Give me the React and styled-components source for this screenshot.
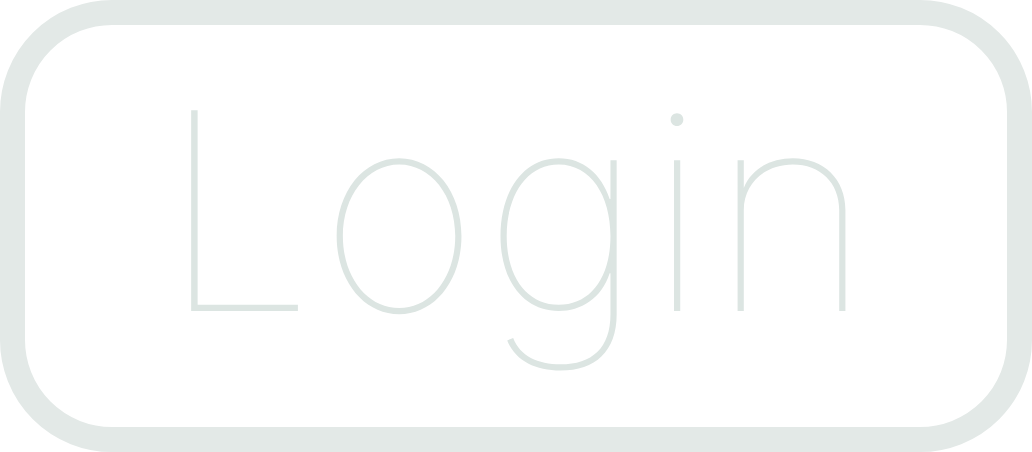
import React from 'react';
import styled, { createGlobalStyle } from 'styled-components';

const GlobalStyle = createGlobalStyle`
  html, body {
    margin: 0;
    padding: 0;
    background: #ffffff;
  }
`;

const Page = styled.div`
  width: 1032px;
  height: 452px;
  display: flex;
`;

const LoginButton = styled.button`
  flex: 1;
  box-sizing: border-box;
  display: flex;
  align-items: center;
  justify-content: center;
  padding: 0 0 31px 4px;
  background: #ffffff;
  border: 25px solid #e3e9e7;
  border-radius: 112px;
  color: #dce5e2;
  font-family: Inter, 'Noto Sans', sans-serif;
  font-weight: 100;
  font-size: 276px;
  letter-spacing: 4px;
  line-height: 1;
  cursor: pointer;
`;

const App = () => {
  return (
    <>
      <GlobalStyle />
      <Page>
        <LoginButton type="button">Login</LoginButton>
      </Page>
    </>
  );
};

export default App;
